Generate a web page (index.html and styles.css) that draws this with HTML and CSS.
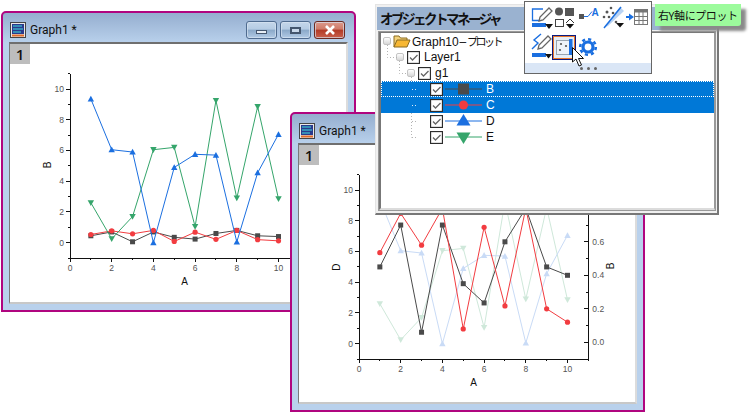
FILE: index.html
```html
<!DOCTYPE html>
<html lang="ja">
  <head>
    <meta charset="UTF-8" />
    <title>Object Manager</title>
    <link rel="stylesheet" href="styles.css">
  </head>
  <body>
    <div class="window first">
      <div class="titlebar">
        <svg class="app-icon" width="16" height="16" viewBox="0 0 16 16">
          <rect x="0.5" y="0.5" width="15" height="15" fill="#e8e8e8" stroke="#444"/>
          <rect x="2" y="2" width="12" height="10" fill="#2a3a8c"/>
          <path d="M3 4h9M3 7h10M3 10h8" stroke="#3fe0e0" stroke-width="1.2"/>
          <path d="M2 13.5h12" stroke="#e06a2a" stroke-width="2"/>
        </svg>
        <span class="title">Graph1 *</span>
        <div class="buttons">
          <div class="btn"><span class="min-glyph"></span></div>
          <div class="btn"><span class="max-glyph"></span></div>
          <div class="btn close">
            <svg width="12" height="10" viewBox="0 0 12 10"><path d="M2 1l8 8M10 1l-8 8" stroke="#fff" stroke-width="2.6"/></svg>
          </div>
        </div>
      </div>
      <div class="client">
        <div class="tag">1</div>
        <svg class="plot" id="plot1" width="338" height="258"></svg>
      </div>
    </div>

    <div class="window second">
      <div class="titlebar">
        <svg class="app-icon" width="16" height="16" viewBox="0 0 16 16">
          <rect x="0.5" y="0.5" width="15" height="15" fill="#e8e8e8" stroke="#444"/>
          <rect x="2" y="2" width="12" height="10" fill="#2a3a8c"/>
          <path d="M3 4h9M3 7h10M3 10h8" stroke="#3fe0e0" stroke-width="1.2"/>
          <path d="M2 13.5h12" stroke="#e06a2a" stroke-width="2"/>
        </svg>
        <span class="title">Graph1 *</span>
      </div>
      <div class="client">
        <div class="tag">1</div>
        <svg class="plot" id="plot2" width="338" height="258"></svg>
      </div>
    </div>

    <div class="manager">
      <div class="manager-head">オブジェクトマネージャ</div>
      <div class="tree">
        <div class="row lvl0">
          <span class="expander"></span>
          <svg class="folder" width="18" height="14" viewBox="0 0 18 14">
            <path d="M1 13V2h5l1.500 2H14v2" fill="#f3d27a" stroke="#8a6a20"/>
            <path d="M1 13l3-7h13l-3 7z" fill="#f7b733" stroke="#8a6a20"/>
          </svg>
          <span class="label root-label">Graph10 – <span class="kana">プロット</span></span>
        </div>
        <div class="row lvl1">
          <span class="expander"></span>
          <svg class="check" width="13" height="13" viewBox="0 0 13 13"><rect x="0.500" y="0.500" width="12" height="12"/><path d="M3 6.500l2.500 2.500 5-5"/></svg>
          <span class="label">Layer1</span>
        </div>
        <div class="row lvl2">
          <span class="expander"></span>
          <svg class="check" width="13" height="13" viewBox="0 0 13 13"><rect x="0.500" y="0.500" width="12" height="12"/><path d="M3 6.500l2.500 2.500 5-5"/></svg>
          <span class="label">g1</span>
        </div>
        <div class="row lvl3 selected focus">
          <svg class="check" width="13" height="13" viewBox="0 0 13 13"><rect x="0.500" y="0.500" width="12" height="12"/><path d="M3 6.500l2.500 2.500 5-5"/></svg>
          <svg class="swatch" width="39" height="16" viewBox="0 0 39 16"><path d="M1 8H38" stroke="#4a4a4a"/><rect x="14" y="2.500" width="11" height="11" fill="#4a4a4a"/></svg>
          <span class="label">B</span>
        </div>
        <div class="row lvl3 selected">
          <svg class="check" width="13" height="13" viewBox="0 0 13 13"><rect x="0.500" y="0.500" width="12" height="12"/><path d="M3 6.500l2.500 2.500 5-5"/></svg>
          <svg class="swatch" width="39" height="16" viewBox="0 0 39 16"><path d="M1 8H38" stroke="#f23c40"/><circle cx="19.500" cy="8" r="4.500" fill="#f23c40"/></svg>
          <span class="label">C</span>
        </div>
        <div class="row lvl3">
          <svg class="check" width="13" height="13" viewBox="0 0 13 13"><rect x="0.500" y="0.500" width="12" height="12"/><path d="M3 6.500l2.500 2.500 5-5"/></svg>
          <svg class="swatch" width="39" height="16" viewBox="0 0 39 16"><path d="M1 8H38" stroke="#1b6fe0"/><path d="M19.500 1l7 11.500h-14z" fill="#1b6fe0"/></svg>
          <span class="label">D</span>
        </div>
        <div class="row lvl3">
          <svg class="check" width="13" height="13" viewBox="0 0 13 13"><rect x="0.500" y="0.500" width="12" height="12"/><path d="M3 6.500l2.500 2.500 5-5"/></svg>
          <svg class="swatch" width="39" height="16" viewBox="0 0 39 16"><path d="M1 8H38" stroke="#35a56b"/><path d="M19.500 15l-7-11.500h14z" fill="#35a56b"/></svg>
          <span class="label">E</span>
        </div>
        <svg class="tree-lines" width="60" height="110" viewBox="0 0 60 110">
          <path d="M6.500 12V24.500H16M18.500 28V40.500H26M30.500 44V48M30.500 80V104.500M31 88.500H37M31 104.500H37"/>
          <path class="on-blue" d="M31 56.500H37M31 72.500H37"/>
        </svg>
      </div>
    </div>

    <div class="popup">
      <div class="tool-row">
        <svg width="22" height="24" viewBox="0 0 22 24">
          <path d="M12 4H1.500V15.500H9" fill="none" stroke="#1b6fe0" stroke-width="1.300"/>
          <path d="M18 3l3 3-9 9-4 1 1-4z" fill="#fff" stroke="#666" stroke-width="1.300"/>
          <path d="M1 18h14v4H1z" fill="#1b6fe0"/>
          <path d="M14 19h8l-4 5z" fill="#111"/>
        </svg>
        <svg width="22" height="24" viewBox="0 0 22 24">
          <circle cx="4" cy="6.500" r="4" fill="#555"/>
          <rect x="10" y="3" width="9" height="8" fill="#555"/>
          <rect x="0.500" y="14.500" width="8" height="7" fill="none" stroke="#444"/>
          <path d="M11 18l4-4 4 4" fill="none" stroke="#333"/>
          <path d="M11 19h8l-4 4.500z" fill="#111"/>
        </svg>
        <svg width="23" height="24" viewBox="0 0 23 24">
          <rect x="1" y="9" width="5" height="5" fill="#555"/>
          <path d="M6 11.500h4l4-5" fill="none" stroke="#1b6fe0"/>
          <text class="icon-a" x="13.500" y="11">A</text>
        </svg>
        <svg width="23" height="24" viewBox="0 0 23 24">
          <path d="M18 2l4 4-16 15-3 1z" fill="#b9d3f3"/>
          <path d="M2 23L19 2" stroke="#1b6fe0" stroke-width="1.500"/>
          <g fill="#555">
            <circle cx="9" cy="3" r="1.300"/><circle cx="5" cy="7" r="1.500"/><circle cx="11" cy="8" r="1.300"/>
            <circle cx="2" cy="12" r="1.300"/><circle cx="7" cy="12" r="1.300"/><circle cx="14" cy="17" r="1.300"/>
          </g>
          <path d="M14 18h8l-4 4.500z" fill="#111"/>
        </svg>
        <svg width="22" height="24" viewBox="0 0 22 24">
          <path d="M0 11h3V8.500l5 3.500-5 3.500V13H0z" fill="#1b6fe0"/>
          <rect x="8.500" y="4.500" width="13" height="15" fill="#fff" stroke="#777"/>
          <path d="M8.500 4.500h13v3h-13z" fill="#777"/>
          <path d="M13 5v14M17 5v14M9 11.500h12M9 15.500h12" stroke="#777"/>
        </svg>
      </div>
      <div class="tool-row lower">
        <svg class="pen" width="21" height="26" viewBox="0 0 21 26">
          <path d="M1 16l6-6-4-3 7-6" fill="none" stroke="#1b6fe0" stroke-width="1.400"/>
          <path d="M17 3l3 3-9 9-4 1 1-4z" fill="#fff" stroke="#666" stroke-width="1.300"/>
          <path d="M1 20h14v4H1z" fill="#1b6fe0"/>
          <path d="M14 21h7l-3.500 4.500z" fill="#111"/>
        </svg>
        <svg width="24" height="25" viewBox="0 0 24 25">
          <rect x="0.500" y="0.500" width="23" height="24" fill="#e6eef7" stroke="#0a1a80"/>
          <rect x="1.500" y="1.500" width="21" height="22" fill="none" stroke="#e8752a"/>
          <rect x="4.500" y="5.500" width="14" height="14" fill="#eef3f9" stroke="#9aa5b0"/>
          <rect x="17" y="4" width="3.500" height="16" fill="#1b6fe0"/>
          <g fill="#555">
            <circle cx="9" cy="9" r="1.100"/><circle cx="14" cy="11" r="1.100"/><circle cx="8" cy="15" r="1.100"/>
          </g>
        </svg>
        <svg class="gear" width="20" height="24" viewBox="0 0 20 24">
          <circle cx="10" cy="12" r="7.800" fill="none" stroke="#1b6fe0" stroke-width="2.600" stroke-dasharray="3.100 3"/>
          <circle cx="10" cy="12" r="5" fill="none" stroke="#1b6fe0" stroke-width="3.200"/>
        </svg>
      </div>
      <div class="grip"><span></span><span></span><span></span></div>
    </div>

    <svg class="cursor" width="15" height="21" viewBox="0 0 15 21">
      <path d="M0.500 0.500V15l3.500-3 3 7 2.500-1-3-6.500h5z" fill="#fff" stroke="#111"/>
    </svg>

    <div class="tooltip">右Y軸にプロット</div>

    <script src="charts.js"></script>
  </body>
</html>
```

FILE: styles.css
```css
* {
  box-sizing: border-box;
  margin: 0;
  padding: 0;
}

html,
body {
  width: 749px;
  height: 412px;
  overflow: hidden;
  background: #fff;
}

body {
  position: relative;
  font-family: "Liberation Sans", "Noto Sans CJK JP", sans-serif;
}

/* graph windows */
.window {
  position: absolute;
  width: 355px;
  display: flex;
  flex-direction: column;
  border: 2px solid #b0057f;
  border-radius: 5px 5px 0 0;
  background: linear-gradient(#95aecf, #b9d1ec 30px);
  padding: 0 6px 6px;
}

.first {
  left: 1px;
  top: 11px;
  height: 301px;
}

.second {
  left: 290px;
  top: 112px;
  height: 300px;
}

.titlebar {
  height: 29px;
  padding-top: 5px;
  display: flex;
  align-items: center;
  flex-shrink: 0;
}

.app-icon {
  margin-left: 1px;
}

.title {
  margin-left: 4px;
  font-family: Roboto, sans-serif;
  font-size: 12px;
  color: #111;
}

.buttons {
  margin-left: auto;
  margin-right: 3px;
  display: flex;
  gap: 3px;
}

.btn {
  width: 31px;
  height: 18px;
  display: flex;
  align-items: center;
  justify-content: center;
  border: 1px solid #4f6b8f;
  border-radius: 3px;
  background: linear-gradient(#c4d6ea 0, #b5cbe3 45%, #8aa8c8 50%, #b2cbe6 100%);
  box-shadow: inset 0 0 0 1px #d8e4f1aa;
}

.close {
  border-color: #6b2a22;
  background: linear-gradient(#dc9a8c 0, #cf7a68 45%, #b23a26 50%, #c9604c 100%);
}

.min-glyph {
  width: 11px;
  height: 4px;
  margin-top: 3px;
  background: #e8eef5;
  border: 1px solid #44566e;
}

.max-glyph {
  width: 11px;
  height: 7px;
  background: #c8d8ea;
  border: 2px solid #44566e;
}

.client {
  position: relative;
  flex: 1;
  overflow: hidden;
  background: #fff;
  border-style: solid;
  border-width: 2px 2px 2px 1px;
  border-color: #6f6f6f #dcdcdc #c8c8c8 #7a7a7a;
}

.tag {
  position: absolute;
  left: 0;
  top: 0;
  width: 20px;
  height: 20px;
  background: #bdbdbd;
  font-family: "Open Sans", sans-serif;
  font-size: 15px;
  font-weight: 600;
  line-height: 20px;
  text-align: center;
  color: #111;
}

.plot {
  display: block;
}

.axis {
  stroke: #111;
  stroke-width: 1;
  shape-rendering: crispEdges;
  fill: none;
}

.tick {
  font-family: "Liberation Sans", sans-serif;
  font-size: 8.5px;
  fill: #555;
}

.axis-title {
  font-family: "Liberation Sans", sans-serif;
  font-size: 10px;
  fill: #111;
}

/* object manager */
.manager {
  position: absolute;
  left: 375px;
  top: 4px;
  width: 344px;
  height: 211px;
  padding: 2px 1px 1px;
  background: #f0f0f0;
  border-style: solid;
  border-width: 1px 2px 2px 1px;
  border-color: #e4e4e4 #777 #777 #e4e4e4;
}

.manager-head {
  height: 23px;
  padding-left: 3px;
  background: #9ab2d0;
  font-family: "Noto Sans CJK JP", sans-serif;
  font-size: 13.5px;
  font-weight: 700;
  line-height: 22px;
  letter-spacing: -2.500px;
  color: #111;
}

.tree {
  position: relative;
  height: 178px;
  margin: 2px 1px 0 2px;
  background: #fff;
  border-style: solid;
  border-width: 1px 1px 2px 2px;
  border-color: #777 #999 #dcdcdc #777;
  outline: 1px solid #999;
}

.tree-lines {
  position: absolute;
  left: 0;
  top: 0;
  fill: none;
  stroke: #b4b4b4;
  stroke-dasharray: 1 2;
}

.tree-lines .on-blue {
  stroke: #dce9f7;
}

.row {
  height: 16px;
  display: flex;
  align-items: center;
  font-size: 12px;
  color: #111;
}

.lvl0 {
  padding-left: 2px;
}

.lvl1 {
  padding-left: 15px;
}

.lvl2 {
  padding-left: 26px;
}

.lvl3 {
  padding-left: 49px;
}

.selected {
  background: #0078d7;
  color: #fff;
}

.focus {
  outline: 1px dotted #fff;
  outline-offset: -1px;
}

.expander {
  width: 8px;
  height: 8px;
  border: 1px solid #c4c4c4;
  border-radius: 2px;
  background: linear-gradient(#fff, #d8d8d8);
}

.folder {
  margin-left: 2px;
  margin-right: 1px;
}

.check {
  flex-shrink: 0;
  fill: #fff;
  stroke: #2c2c2c;
  stroke-width: 1.300;
}

.check path {
  fill: none;
  stroke: #666;
  stroke-width: 1.300;
}

.lvl1 .check,
.lvl2 .check {
  margin-left: 3px;
  margin-right: 4px;
}

.swatch {
  margin-left: 1px;
  margin-right: 3px;
}

.root-label {
  word-spacing: -2.500px;
}

.kana {
  font-family: "Noto Sans CJK JP", sans-serif;
  font-size: 11px;
  letter-spacing: -2.500px;
}

/* floating toolbar */
.popup {
  position: absolute;
  left: 524px;
  top: 1px;
  width: 128px;
  height: 73px;
  display: flex;
  flex-direction: column;
  background: #fff;
  border: 1px solid #666;
}

.tool-row {
  display: flex;
  gap: 1px;
  padding: 3px 0 0 6px;
  height: 29px;
}

.tool-row svg:first-child {
  margin-right: 1px;
}

.tool-row.lower {
  height: 32px;
  padding-top: 4px;
  gap: 0;
}

.tool-row.lower .pen {
  margin: -2px 0 0;
}

.gear {
  margin-left: 2px;
}

.icon-a {
  font-family: "Liberation Sans", sans-serif;
  font-size: 10px;
  font-weight: 700;
  fill: #1b6fe0;
}

.grip {
  flex: 1;
  display: flex;
  align-items: center;
  justify-content: center;
  gap: 4px;
  background: #dae6f6;
}

.grip span {
  width: 3px;
  height: 3px;
  border-radius: 50%;
  background: #666;
}

.cursor {
  position: absolute;
  left: 572px;
  top: 47px;
}

.tooltip {
  position: absolute;
  left: 655px;
  top: 4px;
  width: 86px;
  height: 22px;
  padding-left: 3px;
  background: #9cfb9c;
  font-family: "Noto Sans CJK JP", sans-serif;
  font-size: 11px;
  line-height: 22px;
  letter-spacing: -0.400px;
  color: #111;
  box-shadow: 5px 5px 3px #8a8a8a;
  border-radius: 0 0 3px 0;
}
```

FILE: charts.js
```js
const SVG_NS = "http://www.w3.org/2000/svg";

const xs = [1, 2, 3, 4, 5, 6, 7, 8, 9, 10];
const data = {
  B: [0.45, 0.7, 0.06, 0.7, 0.35, 0.235, 0.6, 0.8, 0.45, 0.4],
  C: [0.535, 0.77, 0.58, 0.8, 0.08, 0.687, 0.217, 0.8, 0.2, 0.12],
  D: [9.35, 6.05, 5.9, 0, 4.9, 5.75, 5.7, 0.05, 4.55, 7.05],
  E: [2.6, 0.25, 1.7, 6.05, 6.2, 1.05, 9.25, 2.9, 8.85, 2.85],
};

const X0 = 60;
const Y0 = 198.7;
const scaleX = (v) => X0 + v * 20.85;
const scaleY = (v) => Y0 - v * 15.37;
const scaleRight = (v) => 197.3 - v * 167.5;

function add(svg, tag, attrs, text) {
  const el = document.createElementNS(SVG_NS, tag);
  for (const key in attrs) el.setAttribute(key, attrs[key]);
  if (text !== undefined) el.textContent = text;
  svg.appendChild(el);
  return el;
}

function marker(svg, kind, x, y, color) {
  if (kind === "square") {
    add(svg, "rect", { x: x - 2.5, y: y - 2.5, width: 5, height: 5, fill: color });
  } else if (kind === "circle") {
    add(svg, "circle", { cx: x, cy: y, r: 2.6, fill: color });
  } else if (kind === "up") {
    add(svg, "polygon", { points: `${x},${y - 3.2} ${x - 3.2},${y + 2.6} ${x + 3.2},${y + 2.6}`, fill: color });
  } else {
    add(svg, "polygon", { points: `${x},${y + 3.2} ${x - 3.2},${y - 2.6} ${x + 3.2},${y - 2.6}`, fill: color });
  }
}

function series(svg, values, scale, kind, color) {
  const pts = xs.map((x, i) => `${scaleX(x)},${scale(values[i])}`).join(" ");
  add(svg, "polyline", { points: pts, fill: "none", stroke: color, "stroke-width": 1 });
  xs.forEach((x, i) => marker(svg, kind, scaleX(x), scale(values[i]), color));
}

function axes(svg) {
  const left = scaleX(0);
  const bottom = scaleY(-1);
  add(svg, "path", { class: "axis", d: `M${left} ${scaleY(11)}V${bottom}H${scaleX(11)}` });

  for (let v = -1; v <= 11; v++) {
    const len = v % 2 === 0 ? 4 : 2;
    add(svg, "path", { class: "axis", d: `M${left} ${scaleY(v)}h${-len}` });
    if (v % 2 === 0 && v >= 0 && v <= 10) {
      add(svg, "text", { class: "tick", x: left - 6, y: scaleY(v) + 3, "text-anchor": "end" }, v);
    }
  }
  for (let v = 0; v <= 11; v++) {
    const len = v % 2 === 0 ? 4 : 2;
    add(svg, "path", { class: "axis", d: `M${scaleX(v)} ${bottom}v${len}` });
    if (v % 2 === 0) {
      add(svg, "text", { class: "tick", x: scaleX(v), y: bottom + 13, "text-anchor": "middle" }, v);
    }
  }
  add(svg, "text", { class: "axis-title", x: scaleX(5.5), y: bottom + 27, "text-anchor": "middle" }, "A");
}

function sideTitle(svg, x, y, text) {
  add(svg, "text", { class: "axis-title", x: x, y: y, "text-anchor": "middle", transform: `rotate(-90 ${x} ${y})` }, text);
}

function rightAxis(svg) {
  const right = scaleX(11);
  add(svg, "path", { class: "axis", d: `M${right} ${scaleY(11)}V${scaleY(-1)}` });
  for (let i = 0; i <= 7; i++) {
    const v = i / 10;
    const major = i % 2 === 0;
    add(svg, "path", { class: "axis", d: `M${right} ${scaleRight(v)}h${major ? -4 : -2}` });
    if (major) {
      add(svg, "text", { class: "tick", x: right + 4, y: scaleRight(v) + 3 }, v.toFixed(1));
    }
  }
  sideTitle(svg, 315, 121, "B");
}

// left graph: everything on one scale
const plot1 = document.getElementById("plot1");
axes(plot1);
sideTitle(plot1, 41, 121, "B");
series(plot1, data.B, scaleY, "square", "#4a4a4a");
series(plot1, data.C, scaleY, "circle", "#f23c40");
series(plot1, data.E, scaleY, "down", "#35a56b");
series(plot1, data.D, scaleY, "up", "#1b6fe0");

// front graph: D and E dimmed, B and C moved to the right axis
const plot2 = document.getElementById("plot2");
series(plot2, data.E, scaleY, "down", "#cfe8da");
series(plot2, data.D, scaleY, "up", "#c9dbf6");
axes(plot2);
rightAxis(plot2);
sideTitle(plot2, 41, 122, "D");
series(plot2, data.B, scaleRight, "square", "#4a4a4a");
series(plot2, data.C, scaleRight, "circle", "#f23c40");
```
